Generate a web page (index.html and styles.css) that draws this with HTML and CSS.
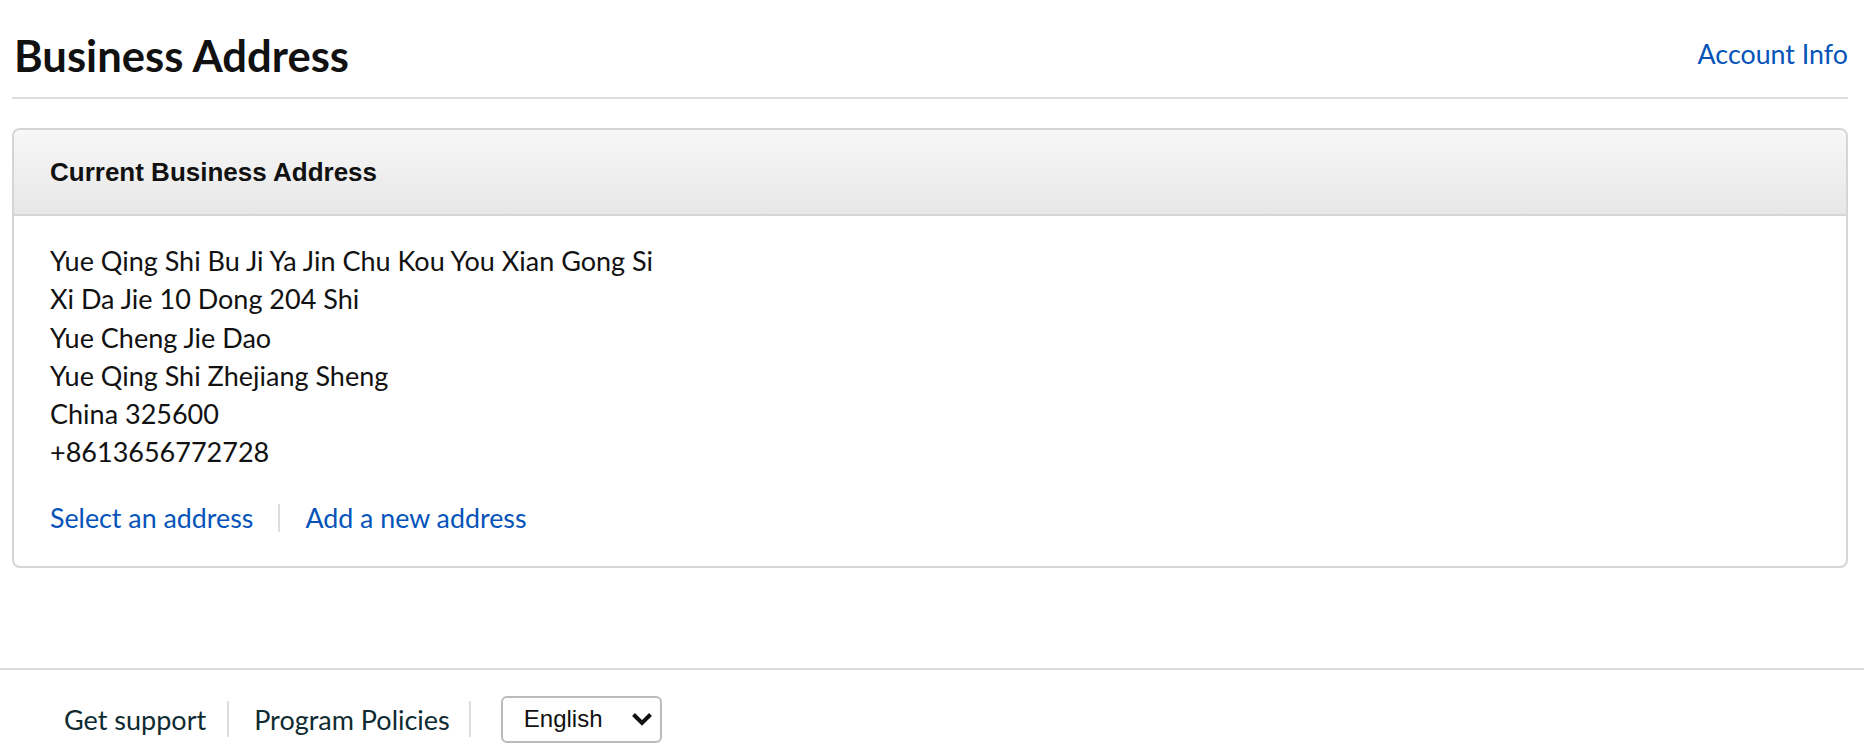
FILE: index.html
```html
<!DOCTYPE html>
<html lang="en">
<head>
<meta charset="utf-8">
<title>Business Address</title>
<link rel="stylesheet" href="styles.css">
</head>
<body>
<div class="page">
  <header class="page-head">
    <h1 class="page-title">Business Address</h1>
    <a class="link head-link" href="#">Account Info</a>
  </header>
  <section class="card">
    <div class="card-head">Current Business Address</div>
    <div class="card-body">
      <div class="address">
        <div>Yue Qing Shi Bu Ji Ya Jin Chu Kou You Xian Gong Si</div>
        <div>Xi Da Jie 10 Dong 204 Shi</div>
        <div>Yue Cheng Jie Dao</div>
        <div>Yue Qing Shi Zhejiang Sheng</div>
        <div>China 325600</div>
        <div>+8613656772728</div>
      </div>
      <div class="actions">
        <a class="link" href="#">Select an address</a>
        <span class="sep"></span>
        <a class="link" href="#">Add a new address</a>
      </div>
    </div>
  </section>
</div>
<footer class="footer">
  <a class="foot-link" href="#">Get support</a>
  <span class="sep foot-sep"></span>
  <a class="foot-link" href="#">Program Policies</a>
  <span class="sep foot-sep foot-sep-last"></span>
  <div class="lang">
    <span class="lang-text">English</span>
    <svg class="chev" viewBox="0 0 22 14" width="22" height="14"><path d="M2.5 2.5 L11 11 L19.5 2.5" fill="none" stroke="#111" stroke-width="4"/></svg>
  </div>
</footer>
</body>
</html>
```
FILE: styles.css
```css
* { box-sizing: border-box; }
html, body { margin: 0; padding: 0; background: #fff; }
body { font-family: Lato, "Noto Sans", sans-serif; color: #111; }
.page { padding: 0 16px 0 12px; }
.page-head { display: flex; justify-content: space-between; align-items: center; padding: 29px 0 16px 2px; border-bottom: 2px solid #ddd; }
.page-title { margin: 0; font-size: 43.6px; line-height: 52px; font-weight: 700; }
.link { color: #0654ba; text-decoration: none; font-size: 26.8px; }
.head-link { margin-bottom: 2px; }
.card { margin-top: 29px; border: 2px solid #d5d5d5; border-radius: 8px; overflow: hidden; }
.card-head { height: 86px; display: flex; align-items: center; padding-left: 36px; font-family: "Liberation Sans", Arial, sans-serif; font-weight: 700; font-size: 26px; color: #111; background: linear-gradient(#f7f7f7, #e7e7e7); border-bottom: 2px solid #d5d5d5; }
.card-body { padding: 26px 36px 32px; }
.address { font-size: 27px; line-height: 38.3px; }
.actions { display: flex; align-items: center; margin-top: 30px; }
.sep { display: inline-block; width: 2px; height: 28px; background: #ddd; margin: 0 25px; }
.footer { margin-top: 100px; border-top: 2px solid #ddd; display: flex; align-items: center; padding: 26px 0 10px 64px; }
.foot-link { color: #0f2b32; text-decoration: none; font-size: 27px; }
.foot-sep { height: 36px; margin: 0 25px 0 21px; }
.foot-sep-last { margin: 0 30px 0 19px; }
.lang { display: flex; align-items: center; justify-content: space-between; width: 161px; height: 47px; border: 2px solid #bbb; border-radius: 6px; padding: 0 7px 0 21px; font-family: "Liberation Sans", Arial, sans-serif; font-size: 24px; color: #111; }
```
